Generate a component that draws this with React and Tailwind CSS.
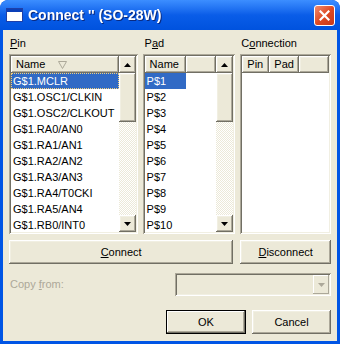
import React from 'react';

const FONT = { fontFamily: '"Liberation Sans", Arial, sans-serif' };

const pins = [
  'G$1.MCLR', 'G$1.OSC1/CLKIN', 'G$1.OSC2/CLKOUT', 'G$1.RA0/AN0', 'G$1.RA1/AN1',
  'G$1.RA2/AN2', 'G$1.RA3/AN3', 'G$1.RA4/T0CKI', 'G$1.RA5/AN4', 'G$1.RB0/INT0',
];
const pads = ['P$1', 'P$2', 'P$3', 'P$4', 'P$5', 'P$6', 'P$7', 'P$8', 'P$9', 'P$10'];

// classic 3d borders
const raised = 'shadow-[inset_-1px_-1px_#716F64,inset_1px_1px_#FFFFFF,inset_-2px_-2px_#ACA899,inset_2px_2px_#F1EFE2]';
const sunken = 'shadow-[inset_1px_1px_#ACA899,inset_-1px_-1px_#FFFFFF,inset_2px_2px_#716F64,inset_-2px_-2px_#F1EFE2]';

function Arrow({ up }) {
  return (
    <div className={`w-[17px] h-[17px] bg-[#ECE9D8] flex items-center justify-center shrink-0 ${raised}`}>
      <svg width="7" height="4" viewBox="0 0 7 4">
        <path d={up ? 'M3.5 0 L7 4 L0 4 Z' : 'M0 0 L7 0 L3.5 4 Z'} fill="#000" />
      </svg>
    </div>
  );
}

function Scrollbar() {
  return (
    <div className="w-[17px] flex flex-col bg-[repeating-conic-gradient(#FFFFFF_0_25%,#ECE9D8_0_50%)] bg-[length:2px_2px]">
      <Arrow up />
      <div className={`h-[49px] bg-[#ECE9D8] ${raised}`} />
      <div className="flex-1" />
      <Arrow />
    </div>
  );
}

function HeaderCell({ children, className = '' }) {
  return (
    <div className={`h-[17px] bg-[#ECE9D8] flex items-center pl-[5px] text-[11px] text-black shrink-0 ${raised} ${className}`}>
      {children}
    </div>
  );
}

function ListBox({ className = '', children }) {
  return (
    <div className={`bg-white p-[2px] h-[180px] flex ${sunken} ${className}`}>
      {children}
    </div>
  );
}

function Button({ children, className = '', dark }) {
  return (
    <div
      className={`h-[24px] bg-[#ECE9D8] flex items-center justify-center text-[11px] text-black ${
        dark
          ? 'shadow-[inset_0_0_0_1px_#000,inset_-2px_-2px_#716F64,inset_2px_2px_#FFFFFF,inset_-3px_-3px_#ACA899]'
          : raised
      } ${className}`}
    >
      {children}
    </div>
  );
}

export default function App() {
  return (
    <div className="w-[340px] h-[344px] bg-[#0055E5] rounded-t-[8px] flex flex-col overflow-hidden" style={FONT}>
      {/* title bar */}
      <div className="h-[30px] shrink-0 flex items-center pl-[7px] pr-[5px] rounded-t-[8px] bg-gradient-to-b from-[#3C8EFF] via-[#0A5DE8] to-[#0052DE]">
        <div className="w-[15px] h-[12px] bg-white border-t-[3px] border-[#0A3FB8] shadow-[0_0_0_1px_#1E3FA8]" />
        <span className="ml-[6px] text-white font-bold text-[14px] drop-shadow-[1px_1px_0_#0A2A80]">
          Connect '' (SO-28W)
        </span>
        <div className="ml-auto w-[21px] h-[21px] rounded-[3px] border border-white bg-gradient-to-br from-[#F08A6C] via-[#DF4A22] to-[#C8381A] flex items-center justify-center">
          <svg width="11" height="11" viewBox="0 0 11 11">
            <path d="M1.5 1.5 L9.5 9.5 M9.5 1.5 L1.5 9.5" stroke="#fff" strokeWidth="2.2" strokeLinecap="square" />
          </svg>
        </div>
      </div>

      {/* body */}
      <div className="flex-1 mx-[3px] mb-[3px] bg-[#ECE9D8] pl-[6px] pr-[6px] pt-[5px] text-[11px] text-black">
        <div className="flex">
          {/* Pin */}
          <div className="w-[129px]">
            <div className="h-[19px] pl-[1px]"><span className="underline">P</span>in</div>
            <ListBox>
              <div className="flex-1 flex flex-col min-w-0">
                <HeaderCell>
                  <span>Name</span>
                  <svg className="ml-[13px]" width="9" height="8" viewBox="0 0 9 8">
                    <path d="M0.5 0.5 L8.5 0.5 L4.5 7.5 Z" fill="none" stroke="#ACA899" />
                  </svg>
                </HeaderCell>
                {pins.map((p, i) => (
                  <div
                    key={p}
                    className={`h-[16px] leading-[16px] pl-[2px] whitespace-nowrap ${
                      i === 0 ? 'bg-[#316AC5] text-white outline-1 outline-dotted outline-[#F0D080] -outline-offset-1' : ''
                    }`}
                  >
                    {p}
                  </div>
                ))}
              </div>
              <Scrollbar />
            </ListBox>
          </div>

          {/* Pad */}
          <div className="w-[93px] ml-[5px]">
            <div className="h-[19px] pl-[2px]">P<span className="underline">a</span>d</div>
            <ListBox>
              <div className="flex-1 flex flex-col min-w-0">
                <div className="flex">
                  <HeaderCell className="w-[41px]">Name</HeaderCell>
                  <HeaderCell className="flex-1" />
                </div>
                {pads.map((p, i) => (
                  <div key={p} className="h-[16px] leading-[16px]">
                    <span className={`inline-block w-[41px] pl-[2px] ${i === 0 ? 'bg-[#316AC5] text-white' : ''}`}>{p}</span>
                  </div>
                ))}
              </div>
              <Scrollbar />
            </ListBox>
          </div>

          {/* Connection */}
          <div className="w-[91px] ml-[5px]">
            <div className="h-[19px] pl-[1px]">C<span className="underline">o</span>nnection</div>
            <ListBox>
              <div className="flex-1 flex flex-col">
                <div className="flex">
                  <HeaderCell className="w-[27px]">Pin</HeaderCell>
                  <HeaderCell className="w-[30px]">Pad</HeaderCell>
                  <HeaderCell className="flex-1" />
                </div>
              </div>
            </ListBox>
          </div>
        </div>

        {/* connect buttons */}
        <div className="flex mt-[6px]">
          <Button className="w-[225px]"><span><span className="underline">C</span>onnect</span></Button>
          <Button className="w-[91px] ml-[7px]"><span><span className="underline">D</span>isconnect</span></Button>
        </div>

        {/* copy from */}
        <div className="flex items-center mt-[9px] h-[23px]">
          <span className="text-[#ACA899] pl-[1px]">Copy <span className="underline">f</span>rom:</span>
          <div className={`ml-auto w-[156px] h-[23px] p-[2px] flex justify-end bg-[#ECE9D8] ${sunken}`}>
            <div className="w-[16px] h-[19px] bg-[#ECE9D8] flex items-center justify-center shadow-[inset_-1px_-1px_#ACA899,inset_1px_1px_#FFFFFF]">
              <svg width="7" height="4" viewBox="0 0 7 4">
                <path d="M0 0 L7 0 L3.5 4 Z" fill="#ACA899" />
              </svg>
            </div>
          </div>
        </div>

        {/* ok / cancel */}
        <div className="flex justify-end mt-[14px]">
          <Button dark className="w-[80px]">OK</Button>
          <Button className="w-[79px] ml-[6px]">Cancel</Button>
        </div>
      </div>
    </div>
  );
}
